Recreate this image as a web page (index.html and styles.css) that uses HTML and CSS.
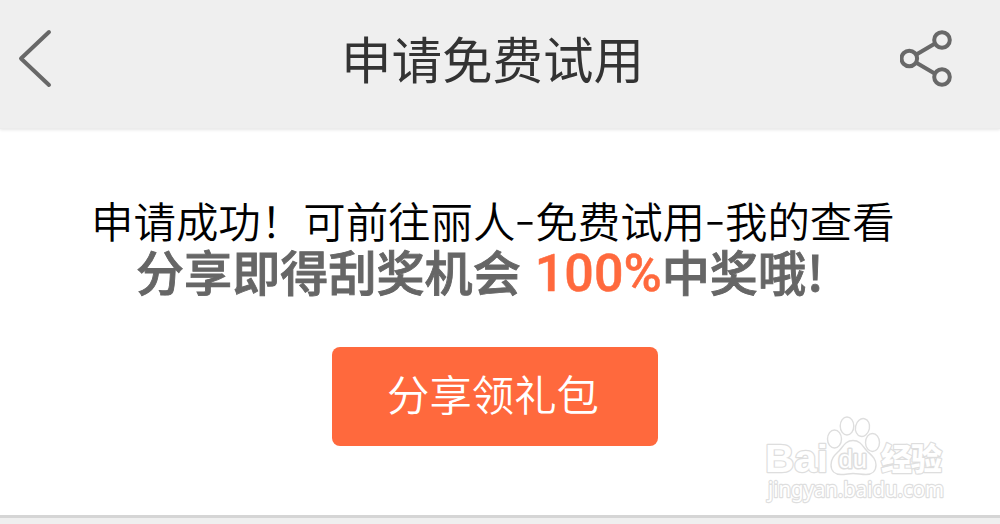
FILE: index.html
```html
<!DOCTYPE html>
<html lang="zh-CN">
<head>
<meta charset="utf-8">
<title>申请免费试用</title>
<link rel="stylesheet" href="styles.css">
</head>
<body>
<header class="topbar">
  <svg class="icon-back" viewBox="0 0 36 60" aria-label="返回"><path d="M31 3 L3 29.5 L31 56"/></svg>
  <h1 class="title">申请免费试用</h1>
  <svg class="icon-share" viewBox="0 0 54 60" aria-label="分享">
    <path d="M17.2 25 L33.8 15.2 M17.2 34.2 L33.8 44"/>
    <circle cx="9.3" cy="29.5" r="7.8"/><circle cx="42" cy="11" r="7.8"/><circle cx="42" cy="48" r="7.8"/>
  </svg>
</header>
<main class="content">
  <p class="message">申请成功！可前往丽人<span class="dash">-</span>免费试用<span class="dash">-</span>我的查看</p>
  <p class="promo"><span>分享即得刮奖机会</span><span class="percent">100%</span><span>中奖哦</span><span class="bang">!</span></p>
  <button class="share-button">分享领礼包</button>
  <svg class="watermark" viewBox="0 0 190 95" aria-label="Baidu 经验">
    <text class="wm-logo" x="5" y="55" textLength="63" lengthAdjust="spacingAndGlyphs">Bai</text>
    <ellipse cx="74.5" cy="22" rx="7" ry="9"/>
    <ellipse cx="87" cy="9" rx="6.8" ry="9"/>
    <ellipse cx="102.5" cy="10.5" rx="7" ry="9" transform="rotate(12 102.5 10.5)"/>
    <ellipse cx="112.5" cy="25.5" rx="7" ry="9"/>
    <path d="M93 23.500 C85 23.500 83 30 79 34 C75 38 71 41 71 48 C71 54 75 57.500 81 57.500 C86 57.500 89 56.500 93 56.500 C98 56.500 101 57.500 106 57.500 C112 57.500 116 54 116 48 C116 41 111 38 107 34 C103 30 101 23.500 93 23.500 Z"/>
    <text class="wm-du" x="78.500" y="50.500" textLength="28.500" lengthAdjust="spacingAndGlyphs">du</text>
    <text class="wm-cn" x="121" y="53" textLength="61">经验</text>
    <text class="wm-url" x="8" y="79.500" textLength="176" lengthAdjust="spacingAndGlyphs">jingyan.baidu.com</text>
  </svg>
</main>
</body>
</html>
```
FILE: styles.css
```css
* { box-sizing: border-box; }
body {
  margin: 0;
  height: 524px;
  overflow: hidden;
  background: #efefef;
  font-family: "Noto Sans CJK SC", sans-serif;
}
.topbar {
  position: relative;
  z-index: 1;
  display: flex;
  align-items: flex-start;
  height: 129px;
  padding: 29px 46px 0 18px;
  background: #efefef;
  border-bottom: 1px solid #ececec;
  box-shadow: 0 1px 3px #e6e6e6;
}
.icon-back, .icon-share {
  fill: none;
  stroke: #686868;
  stroke-linecap: round;
  stroke-linejoin: round;
}
.icon-back { width: 36px; height: 60px; stroke-width: 4; }
.icon-share { width: 54px; height: 60px; margin-left: auto; stroke-width: 4; }
.title {
  margin: -6px 0 0 287px;
  font-size: 50.5px;
  line-height: 68px;
  font-weight: 400;
  color: #333;
  white-space: nowrap;
}
.content {
  position: relative;
  display: flex;
  flex-direction: column;
  align-items: flex-start;
  height: 389px;
  padding-top: 66px;
  background: #fff;
  border-bottom: 3px solid #d5d5d5;
  white-space: nowrap;
}
.message {
  margin: 0 0 0 91px;
  font-size: 42.45px;
  line-height: 50px;
  font-weight: 350;
  color: #000;
}
.dash { display: inline-block; width: 19.9px; text-align: center; transform: translateY(-3px) scaleX(1.4); }
.promo {
  display: flex;
  margin: -1px 0 0 136px;
  font-size: 48.1px;
  line-height: 52px;
  font-weight: 500;
  color: #666;
  -webkit-text-stroke: .9px #666;
}
.percent {
  width: 127px;
  margin-left: 14px;
  padding-top: 4px;
  font-family: Roboto, sans-serif;
  font-size: 52px;
  letter-spacing: 0;
  color: #ff693d;
  -webkit-text-stroke: .5px #ff693d;
}
.bang { margin-left: 1px; }
.share-button {
  width: 326px;
  height: 99px;
  margin: 47px 0 0 332px;
  padding: 0 4px 7px 0;
  border: 0;
  border-radius: 8px;
  background: #ff693d;
  color: #fff;
  font-family: inherit;
  font-size: 42.4px;
  font-weight: 350;
  line-height: 60px;
}
.watermark {
  position: absolute;
  left: 760px;
  top: 288px;
  width: 190px;
  height: 95px;
  overflow: visible;
  fill: #fff;
  stroke: #dedede;
  stroke-width: 1.4;
}
.watermark text { paint-order: stroke; stroke-width: 2.4; stroke-linejoin: round; }
.wm-logo { font: 700 39px "Liberation Sans", sans-serif; }
.watermark .wm-du { font: 400 25px "Liberation Sans", sans-serif; stroke-width: 3; }
.wm-cn { font: 900 31px "Noto Sans CJK SC", sans-serif; }
.wm-url { font: 400 21px "Noto Sans", sans-serif; }
```
